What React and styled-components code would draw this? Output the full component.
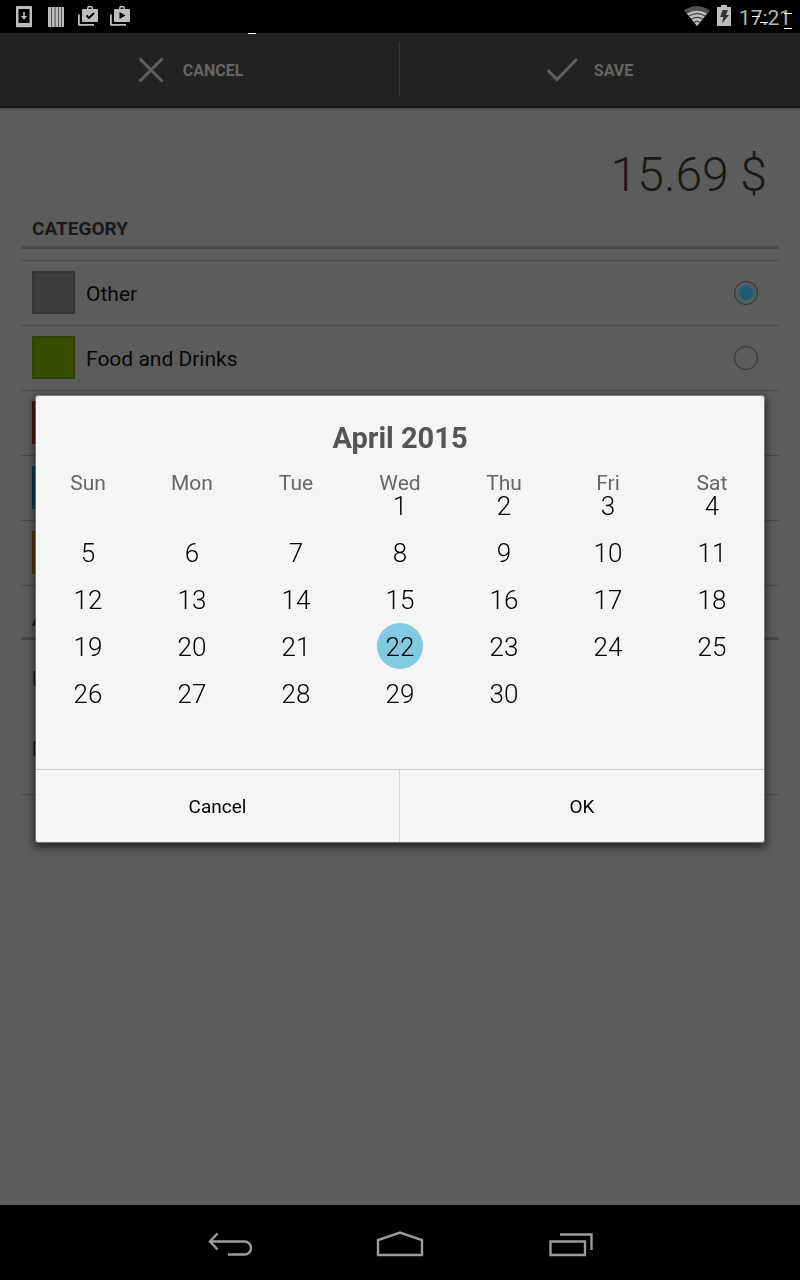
import React, { useState } from "react";
import styled, { createGlobalStyle } from "styled-components";

const GlobalStyle = createGlobalStyle`
  *, *::before, *::after { box-sizing: border-box; }
  body { margin: 0; background: #5c5c5c; font-family: Roboto, "Liberation Sans", sans-serif; }
  button { font-family: inherit; }
`;

const Page = styled.div`
  min-height: 100vh;
  display: flex;
  flex-direction: column;
`;

const StatusBar = styled.header`
  position: relative;
  height: 33px;
  padding: 0 8px;
  display: flex;
  align-items: center;
  justify-content: space-between;
  background: #000;
`;

const StatusGroup = styled.div`
  display: flex;
  align-items: center;
`;

const StatusIcon = styled.svg`
  display: block;
  width: ${(p) => p.$width}px;
  height: 33px;
  fill: #bdbdbd;
`;

const Clock = styled.time`
  width: 54px;
  padding-top: 2px;
  font-size: 21px;
  line-height: 32px;
  text-align: center;
  color: #b4b4b4;
`;

const StatusMarks = styled.svg`
  position: absolute;
  top: 0;
  right: 0;
  fill: #fff;
`;

const BarMark = styled.svg`
  position: absolute;
  top: 33px;
  left: 31%;
  fill: #fff;
`;

const ActionBar = styled.div`
  height: 75px;
  display: flex;
  align-items: center;
  background: #222;
  border-bottom: 2px solid #1b1b1b;
  box-shadow: 0 1px 2px rgba(0, 0, 0, 0.25);
`;

const ActionButton = styled.button`
  width: 50%;
  height: 55px;
  padding: 1px 21px 0 0;
  display: flex;
  align-items: center;
  justify-content: center;
  gap: 16px;
  border: 0;
  border-right: ${(p) => (p.$divided ? "1px solid #3a3a3a" : "0")};
  background: none;
  color: #656565;
  font-size: 16px;
  font-weight: 700;
`;

const Content = styled.main`
  flex: 1;
  padding: 39px 21px 0;
`;

const Amount = styled.div`
  padding-right: 12px;
  font-size: 48px;
  font-weight: 300;
  line-height: 56px;
  text-align: right;
  color: #181818;
`;

const SectionTitle = styled.h2`
  margin: 0;
  padding: ${(p) => (p.$first ? 13 : 21)}px 11px 5px;
  border-bottom: 3px solid #4a4a4a;
  font-size: 19px;
  font-weight: 700;
  line-height: 25px;
  color: #191919;
`;

const CategoryList = styled.div`
  margin-top: 11px;
  border-top: 1px solid #494949;
`;

const CategoryRow = styled.label`
  height: 65px;
  padding: 0 21px 1px 11px;
  display: flex;
  align-items: center;
  gap: 11px;
  border-bottom: 1px solid #494949;
  font-size: 21px;
  color: #060606;
`;

const Swatch = styled.span`
  width: 43px;
  height: 43px;
  background: ${(p) => p.$fill};
  border: 2px solid ${(p) => p.$edge};
`;

const CategoryName = styled.span`
  flex: 1;
  padding-top: 2px;
`;

const Radio = styled.input`
  appearance: none;
  width: 24px;
  height: 24px;
  margin: 0;
  border: 1px solid #303030;
  border-radius: 50%;
  &:checked {
    background: radial-gradient(circle, #225b70 0 6px, #4b6068 8px, #57605f 11px);
  }
`;

const Detail = styled.div`
  height: 70px;
  padding: 0 11px;
  font-size: 20px;
  line-height: 78px;
  color: #101010;
`;

const DetailList = styled.div`
  height: 155px;
  border-bottom: 1px solid #494949;
`;

const NavBar = styled.nav`
  height: 75px;
  display: flex;
  justify-content: center;
  background: #000;
`;

const NavButton = styled.button`
  width: 170px;
  padding: 4px 0 0;
  border: 0;
  background: none;
  svg { display: block; margin: 0 auto; fill: none; stroke: #9b9b9b; stroke-width: 2.4; }
`;

const Overlay = styled.div`
  position: fixed;
  inset: 33px 0 75px;
  padding: 0 36px;
  display: flex;
  align-items: center;
`;

const Dialog = styled.section`
  width: 100%;
  background: #f5f5f5;
  border-radius: 2px;
  box-shadow: 0 0 0 1px rgba(160, 160, 160, 0.6), 0 3px 9px 2px rgba(0, 0, 0, 0.65);
`;

const DialogTitle = styled.h1`
  margin: 0;
  padding: 24px 0 15px;
  font-size: 29px;
  font-weight: 700;
  line-height: 36px;
  text-align: center;
  color: #555;
`;

const Calendar = styled.table`
  width: 100%;
  margin-bottom: 52px;
  border-collapse: collapse;
  table-layout: fixed;
`;

const Weekday = styled.th`
  height: 24px;
  padding: 0;
  font-size: 21px;
  font-weight: 400;
  line-height: 24px;
  color: #666;
`;

const DayCell = styled.td`
  height: ${(p) => (p.$first ? 34 : 47)}px;
  padding: 0;
  vertical-align: top;
`;

const DayButton = styled.button`
  display: block;
  width: 46px;
  height: ${(p) => (p.$first ? 22 : 46)}px;
  margin: 0 auto;
  padding: ${(p) => (p.$first ? 0 : 2)}px 0 0;
  border: 0;
  border-radius: ${(p) => (p.$selected ? "50%" : "0")};
  background: ${(p) => (p.$selected ? "#82c9e2" : "none")};
  font-size: 26px;
  font-weight: 300;
  line-height: 22px;
  color: #000;
`;

const DialogFooter = styled.div`
  height: 73px;
  display: flex;
  border-top: 1px solid #ccc;
`;

const DialogButton = styled.button`
  width: 50%;
  padding: 0;
  border: 0;
  border-right: ${(p) => (p.$divided ? "1px solid #d6d6d6" : "0")};
  background: none;
  font-size: 19px;
  color: #000;
`;

const categories = [
  { name: "Other", fill: "#3d3d3d", edge: "#353535" },
  { name: "Food and Drinks", fill: "#364a00", edge: "#2f4100" },
  { name: "Clothing", fill: "#571515", edge: "#4f1010" },
  { name: "Entertainment", fill: "#0f4353", edge: "#0b3c4b" },
  { name: "Transport", fill: "#5a3e00", edge: "#523800" },
];

const weekdays = ["Sun", "Mon", "Tue", "Wed", "Thu", "Fri", "Sat"];
const firstWeekday = 3;
const weeks = [0, 1, 2, 3, 4].map((w) =>
  weekdays.map((_, d) => {
    const day = w * 7 + d - firstWeekday + 1;
    return day >= 1 && day <= 30 ? day : null;
  })
);

const bagPath =
  "M11 9H15V8a2 2 0 0 1 2-2h2a2 2 0 0 1 2 2v1h4a1 1 0 0 1 1 1v11a1 1 0 0 1-1 1H11a1 1 0 0 1-1-1V10a1 1 0 0 1 1-1ZM16.500 9h3V8.200a.7.7 0 0 0-.7-.7h-1.600a.7.7 0 0 0-.7.7ZM6 14.500h1.800V24H22v1.800H7a1 1 0 0 1-1-1Z";

export default function App() {
  const [category, setCategory] = useState("Other");
  const [selected, setSelected] = useState(22);

  return (
    <>
      <GlobalStyle />
      <Page>
        <StatusBar>
          <StatusGroup>
            <StatusIcon $width={32} viewBox="0 0 32 33">
              <path fillRule="evenodd" d="M9 6h14a1 1 0 0 1 1 1v19.300a1 1 0 0 1-1 1H9a1 1 0 0 1-1-1V7a1 1 0 0 1 1-1ZM10.500 9V23h11V9Z" />
              <path d="M15.200 12h1.600v4h2.500L16 19.500l-3.300-3.500h2.500Z" />
            </StatusIcon>
            <StatusIcon $width={32} viewBox="0 0 32 33">
              <path d="M8 7h16v20H8Z" />
              <path d="M11.500 7v20M15 7v20M18.500 7v20M21.500 7v20" stroke="#333" strokeWidth="0.800" />
            </StatusIcon>
            <StatusIcon $width={32} viewBox="0 0 32 33">
              <path fillRule="evenodd" d={bagPath} />
              <path d="M14.500 15.500l2.500 2.500 5-5" fill="none" stroke="#000" strokeWidth="1.800" />
            </StatusIcon>
            <StatusIcon $width={32} viewBox="0 0 32 33">
              <path fillRule="evenodd" d={bagPath} />
              <path d="M15.500 12v7l6-3.500Z" fill="#000" />
            </StatusIcon>
          </StatusGroup>
          <StatusGroup>
            <StatusIcon $width={27} viewBox="0 0 27 33">
              <path d="M0 10.500Q13 1.500 26 10.500L13 26Z" fill="#505050" />
              <path d="M3 13.500Q13 8 23 13.500L13 26Z" />
              <path d="M4.500 16.200Q13 11 21.500 16.200M7 19.400Q13 15.300 19 19.400M9.500 22.400Q13 20 16.500 22.400" fill="none" stroke="#222" strokeWidth="1" />
            </StatusIcon>
            <StatusIcon $width={27} viewBox="0 0 27 33">
              <path d="M10 5h6v2h4v19H6V7h4Z" />
              <path d="M11.500 10h5.500l-2 5h3L11 23.500l1.300-6.500H9.200Z" fill="#333" />
            </StatusIcon>
            <Clock>17:21</Clock>
          </StatusGroup>
          <StatusMarks width="48" height="33" aria-hidden="true">
            <path d="M0 16h8v1H0ZM8 22h8v1H8ZM32 13h8v1h-8ZM32 28h8v1h-8Z" />
          </StatusMarks>
          <BarMark width="8" height="1" aria-hidden="true">
            <path d="M0 0h8v1H0Z" />
          </BarMark>
        </StatusBar>

        <ActionBar>
          <ActionButton type="button" $divided>
            <svg width="32" height="32" fill="none" stroke="#5f5f5f" strokeWidth="3">
              <path d="M4.500 4.500l23 23M27.500 4.500l-23 23" />
            </svg>
            CANCEL
          </ActionButton>
          <ActionButton type="button">
            <svg width="32" height="32" fill="none" stroke="#5f5f5f" strokeWidth="3">
              <path d="M1.500 16l9.500 9.500L31 5" />
            </svg>
            SAVE
          </ActionButton>
        </ActionBar>

        <Content>
          <Amount>15.69 $</Amount>
          <SectionTitle $first>CATEGORY</SectionTitle>
          <CategoryList>
            {categories.map((c) => (
              <CategoryRow key={c.name}>
                <Swatch $fill={c.fill} $edge={c.edge} />
                <CategoryName>{c.name}</CategoryName>
                <Radio
                  type="radio"
                  name="category"
                  checked={category === c.name}
                  onChange={() => setCategory(c.name)}
                />
              </CategoryRow>
            ))}
          </CategoryList>
          <SectionTitle>ADDITIONAL</SectionTitle>
          <DetailList>
            <Detail>Date</Detail>
            <Detail>Note</Detail>
          </DetailList>
        </Content>

        <NavBar>
          <NavButton type="button" aria-label="Back">
            <svg width="44" height="28">
              <path d="M9.500 2.500L2 10.500l7.500 8M2 10.500h34.500a6.300 6.300 0 0 1 0 13H20" />
            </svg>
          </NavButton>
          <NavButton type="button" aria-label="Home">
            <svg width="48" height="28">
              <path d="M2 24V9L24 1.500 46 9V24Z" />
            </svg>
          </NavButton>
          <NavButton type="button" aria-label="Recent apps">
            <svg width="46" height="28">
              <path d="M3.500 10.500h34.500V24H3.500ZM13 3.500h31.500V19" />
            </svg>
          </NavButton>
        </NavBar>
      </Page>

      <Overlay>
        <Dialog role="dialog" aria-labelledby="month">
          <DialogTitle id="month">April 2015</DialogTitle>
          <Calendar>
            <thead>
              <tr>
                {weekdays.map((d) => (
                  <Weekday key={d} scope="col">{d}</Weekday>
                ))}
              </tr>
            </thead>
            <tbody>
              {weeks.map((week, w) => (
                <tr key={w}>
                  {week.map((day, d) => (
                    <DayCell key={d} $first={w === 0}>
                      {day && (
                        <DayButton
                          type="button"
                          $first={w === 0}
                          $selected={day === selected}
                          onClick={() => setSelected(day)}
                        >
                          {day}
                        </DayButton>
                      )}
                    </DayCell>
                  ))}
                </tr>
              ))}
            </tbody>
          </Calendar>
          <DialogFooter>
            <DialogButton type="button" $divided>Cancel</DialogButton>
            <DialogButton type="button">OK</DialogButton>
          </DialogFooter>
        </Dialog>
      </Overlay>
    </>
  );
}
